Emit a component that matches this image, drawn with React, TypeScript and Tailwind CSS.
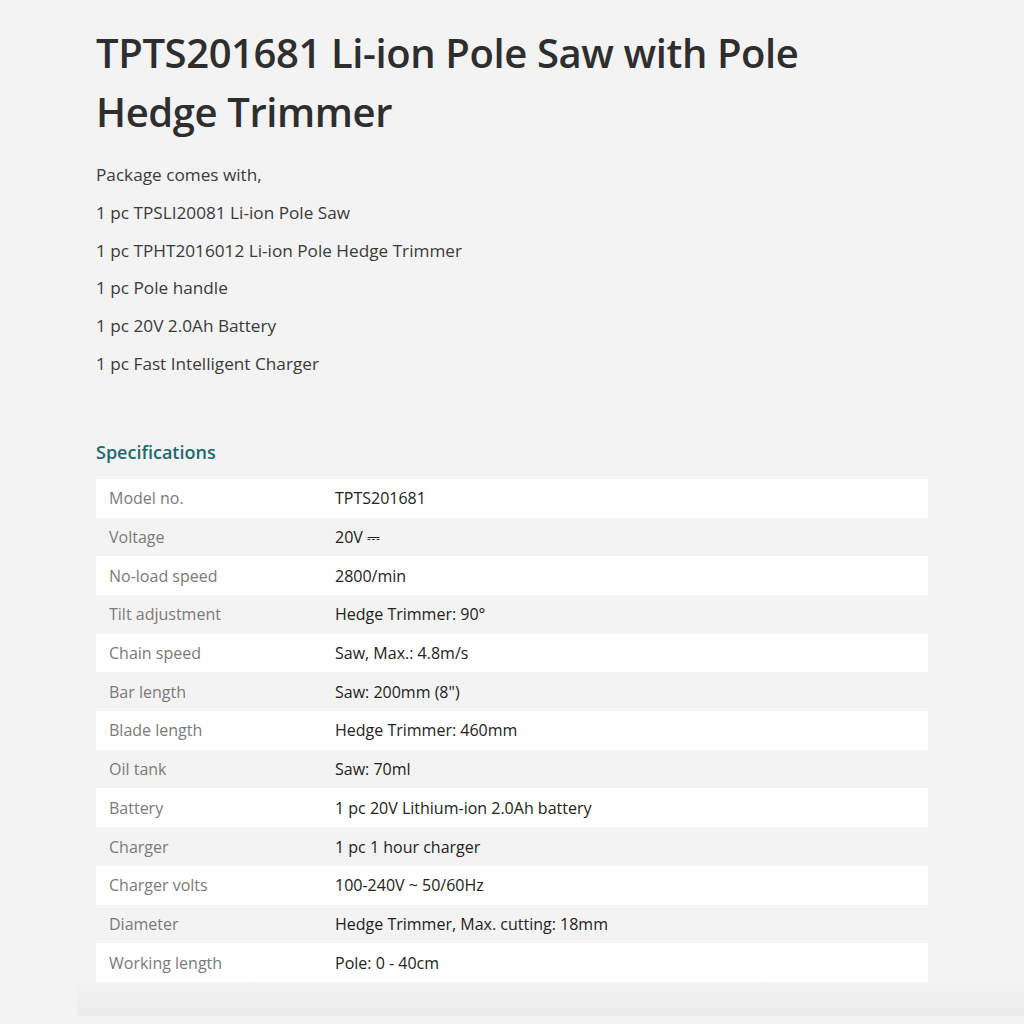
const items = [
  'Package comes with,',
  '1 pc TPSLI20081 Li-ion Pole Saw',
  '1 pc TPHT2016012 Li-ion Pole Hedge Trimmer',
  '1 pc Pole handle',
  '1 pc 20V 2.0Ah Battery',
  '1 pc Fast Intelligent Charger',
]

const specs: [string, string][] = [
  ['Model no.', 'TPTS201681'],
  ['Voltage', '20V ⎓'],
  ['No-load speed', '2800/min'],
  ['Tilt adjustment', 'Hedge Trimmer: 90°'],
  ['Chain speed', 'Saw, Max.: 4.8m/s'],
  ['Bar length', 'Saw: 200mm (8")'],
  ['Blade length', 'Hedge Trimmer: 460mm'],
  ['Oil tank', 'Saw: 70ml'],
  ['Battery', '1 pc 20V Lithium-ion 2.0Ah battery'],
  ['Charger', '1 pc 1 hour charger'],
  ['Charger volts', '100-240V ~ 50/60Hz'],
  ['Diameter', 'Hedge Trimmer, Max. cutting: 18mm'],
  ['Working length', 'Pole: 0 - 40cm'],
]

const App = () => {
  return (
    <div className="min-h-[1024px] w-full bg-[#f3f3f3] font-['Open_Sans',sans-serif] overflow-hidden">
      <div className="w-[832px] ml-[96px] pt-[23px]">
        {/* TITLE */}
        <h1 className="max-w-[760px] font-semibold text-[40px] leading-[59px] tracking-[-0.4px] text-[#2e2e2e]">
          TPTS201681 Li-ion Pole Saw with Pole Hedge Trimmer
        </h1>

        {/* PACKAGE */}
        <div className="mt-[21px] text-[17.2px] text-[#3a3a3a]">
          {items.map((t) => (
            <p key={t} className="leading-[26px] mb-[11.8px]">{t}</p>
          ))}
        </div>

        {/* SPECS */}
        <h2 className="mt-[61px] font-semibold text-[18px] leading-[28px] text-[#1d6a6f]">Specifications</h2>

        <div className="mt-[13px] flex flex-col">
          {specs.map(([k, v], i) => (
            <div
              key={k}
              className={`flex items-center h-[38.7px] text-[16px] ${i % 2 === 0 ? 'bg-white' : ''}`}
            >
              <div className="w-[239px] pl-[13px] text-[#7a7a7a]">{k}</div>
              <div className="font-medium text-[#222]">{v}</div>
            </div>
          ))}
        </div>
      </div>

      {/* bottom shade */}
      <div className="ml-[77px] h-[34px] bg-gradient-to-b from-[#f3f3f3] to-[#ebebeb]" />
    </div>
  )
}

export default App
